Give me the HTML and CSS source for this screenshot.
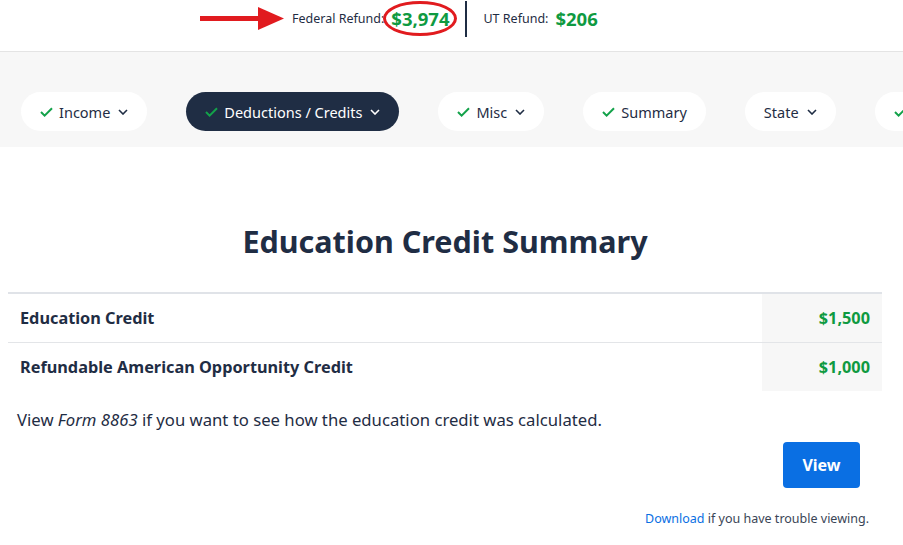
FILE: index.html
```html
<!DOCTYPE html>
<html lang="en">
  <head>
    <meta charset="UTF-8" />
    <meta name="viewport" content="width=device-width, initial-scale=1.0" />
    <title>Education Credit Summary</title>
    <link rel="stylesheet" href="styles.css">
  </head>
  <body>
    <header class="refund-bar">
      <svg class="arrow" width="86" height="24" viewBox="0 0 86 24">
        <rect x="0" y="9" width="62" height="5" fill="#e11b1f" />
        <polygon points="58,0 84,11.5 58,23" fill="#e11b1f" />
      </svg>
      <div class="refund">
        <span class="refund-label">Federal Refund:</span>
        <span class="refund-amount circled">$3,974</span>
      </div>
      <div class="divider"></div>
      <div class="refund">
        <span class="refund-label">UT Refund:</span>
        <span class="refund-amount">$206</span>
      </div>
    </header>

    <nav class="steps">
      <div class="step">
        <svg class="check" width="13" height="10" viewBox="0 0 13 10"><path d="M1 5 L4.6 8.6 L12 1.2" /></svg>
        Income
        <svg class="chev" width="10" height="6" viewBox="0 0 10 6"><path d="M1 1 L5 5 L9 1" /></svg>
      </div>
      <div class="step active">
        <svg class="check" width="13" height="10" viewBox="0 0 13 10"><path d="M1 5 L4.6 8.6 L12 1.2" /></svg>
        Deductions / Credits
        <svg class="chev" width="10" height="6" viewBox="0 0 10 6"><path d="M1 1 L5 5 L9 1" /></svg>
      </div>
      <div class="step">
        <svg class="check" width="13" height="10" viewBox="0 0 13 10"><path d="M1 5 L4.6 8.6 L12 1.2" /></svg>
        Misc
        <svg class="chev" width="10" height="6" viewBox="0 0 10 6"><path d="M1 1 L5 5 L9 1" /></svg>
      </div>
      <div class="step">
        <svg class="check" width="13" height="10" viewBox="0 0 13 10"><path d="M1 5 L4.6 8.6 L12 1.2" /></svg>
        Summary
      </div>
      <div class="step">
        State
        <svg class="chev" width="10" height="6" viewBox="0 0 10 6"><path d="M1 1 L5 5 L9 1" /></svg>
      </div>
      <div class="step">
        <svg class="check" width="13" height="10" viewBox="0 0 13 10"><path d="M1 5 L4.6 8.6 L12 1.2" /></svg>
      </div>
    </nav>

    <main class="content">
      <h1>Education Credit Summary</h1>
      <table class="summary">
        <tr>
          <td class="label">Education Credit</td>
          <td class="amount">$1,500</td>
        </tr>
        <tr>
          <td class="label">Refundable American Opportunity Credit</td>
          <td class="amount">$1,000</td>
        </tr>
      </table>
      <p class="note">View <em>Form 8863</em> if you want to see how the education credit was calculated.</p>
      <div class="actions">
        <button class="view-btn">View</button>
      </div>
      <p class="download"><a href="#">Download</a> if you have trouble viewing.</p>
    </main>
  </body>
</html>
```

FILE: styles.css
```css
body {
  margin: 0;
  font-family: "Noto Sans", Lato, sans-serif;
  color: #1f2d44;
  background: #fff;
}

.refund-bar {
  height: 51px;
  border-bottom: 1px solid #e4e4e4;
  display: flex;
  align-items: center;
  padding-left: 200px;
}

.arrow {
  margin-right: 6px;
  margin-top: -14px;
}

.refund {
  display: flex;
  align-items: center;
  gap: 7px;
  margin-top: -14px;
}

.refund-label {
  font-size: 12.5px;
  color: #1f2d44;
}

.refund-amount {
  font-size: 18.5px;
  font-weight: 700;
  color: #0f9a41;
}

.circled {
  position: relative;
}

.circled::after {
  content: "";
  position: absolute;
  left: -8px;
  right: -8px;
  top: -5px;
  bottom: -5px;
  border: 3px solid #e11b1f;
  border-radius: 50%;
}

.divider {
  width: 2px;
  height: 36px;
  background: #1f2d44;
  margin: -14px 16px 0 16px;
}

.steps {
  background: #f7f7f7;
  display: flex;
  gap: 39px;
  padding: 40px 21px 16px;
  overflow: hidden;
  white-space: nowrap;
}

.step {
  flex: none;
  height: 39px;
  padding: 0 19px;
  border-radius: 20px;
  background: #fff;
  display: flex;
  align-items: center;
  gap: 6px;
  font-size: 14.5px;
  color: #1f2d44;
}

.step.active {
  background: #1f2d44;
  color: #fff;
}

.check path {
  fill: none;
  stroke: #13a24a;
  stroke-width: 2;
}

.chev {
  margin-left: 2px;
}

.chev path {
  fill: none;
  stroke: currentColor;
  stroke-width: 1.6;
}

.content {
  padding: 0 21px 0 8px;
}

h1 {
  margin: 73px 0 30px;
  text-align: center;
  font-size: 30.5px;
  font-weight: 700;
  color: #1f2d44;
}

.summary {
  width: 100%;
  border-collapse: collapse;
  border-top: 2px solid #e0e3e8;
}

.summary td {
  height: 48px;
  font-size: 16.3px;
  font-weight: 700;
  padding: 0 12px;
}

.summary tr + tr td {
  border-top: 1px solid #e3e5e8;
}

.summary .amount {
  width: 96px;
  text-align: right;
  background: #f7f7f7;
  color: #0f9a41;
}

.note {
  margin: 17px 0 0 9px;
  font-size: 16.7px;
}

.actions {
  display: flex;
  justify-content: flex-end;
  margin-top: 11px;
}

.view-btn {
  width: 77px;
  height: 46px;
  margin-right: 22px;
  border: 0;
  border-radius: 4px;
  background: #0a6fe3;
  color: #fff;
  font-family: inherit;
  font-size: 16px;
  font-weight: 700;
}

.download {
  text-align: right;
  margin: 22px 13px 0 0;
  font-size: 12.5px;
  color: #3a4556;
}

.download a {
  color: #0a6fe3;
  text-decoration: none;
}
```
